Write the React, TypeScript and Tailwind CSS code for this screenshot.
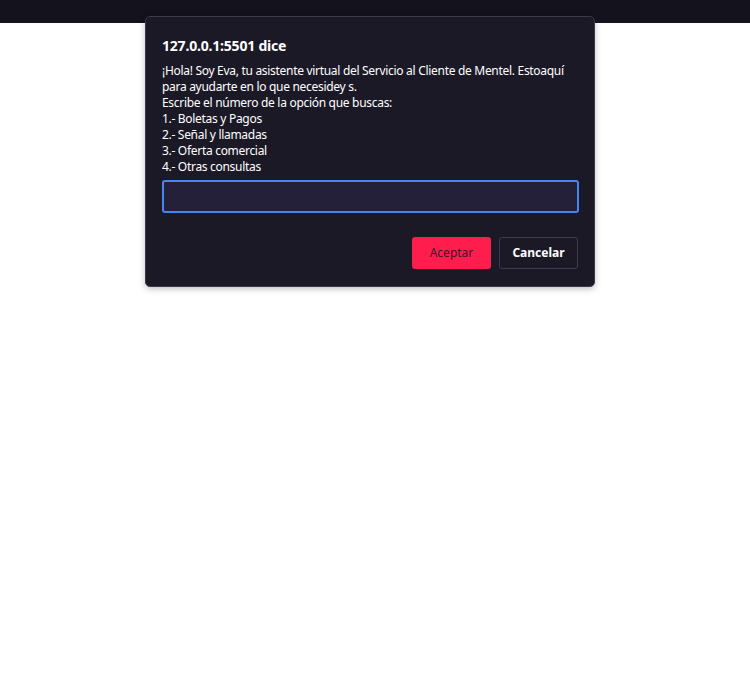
import React from 'react';

export default function App() {
  return (
    <div className="min-h-[700px] w-[750px] bg-white" style={{ fontFamily: '"Noto Sans", "Open Sans", sans-serif' }}>
      <div className="h-[23px] bg-[#14121c]" />
      <div className="-mt-[7px] ml-[145px] w-[450px] rounded-[5px] border border-[#3c3a47] bg-[#1c1927] px-4 pb-[17px] pt-[19px] shadow-[0_2px_6px_rgba(0,0,0,0.25)]">
        <h1 className="text-[14px] font-bold leading-[20px] tracking-[-0.2px] text-white">127.0.0.1:5501 dice</h1>
        <div className="mt-[7px] whitespace-nowrap text-[12px] leading-[16px] tracking-[-0.3px] text-white">
          <p>¡Hola! Soy Eva, tu asistente virtual del Servicio al Cliente de Mentel. Estoaquí</p>
          <p>para ayudarte en lo que necesidey s.</p>
          <p>Escribe el número de la opción que buscas:</p>
          <p>1.- Boletas y Pagos</p>
          <p>2.- Señal y llamadas</p>
          <p>3.- Oferta comercial</p>
          <p>4.- Otras consultas</p>
        </div>
        <input
          className="mt-[5px] block h-[33px] w-[417px] rounded-[3px] border-2 border-[#4285f4] bg-[#25203a] px-2 text-[12px] text-white outline-none"
          type="text"
        />
        <div className="mt-6 flex justify-end gap-2">
          <button className="h-[32px] w-[79px] rounded-[3px] bg-[#ff1d4e] text-[12px] text-[#3b1526]">Aceptar</button>
          <button className="h-[32px] w-[79px] rounded-[3px] border border-[#3d3a55] bg-[#1c1927] text-[12px] font-bold text-white">Cancelar</button>
        </div>
      </div>
    </div>
  );
}
